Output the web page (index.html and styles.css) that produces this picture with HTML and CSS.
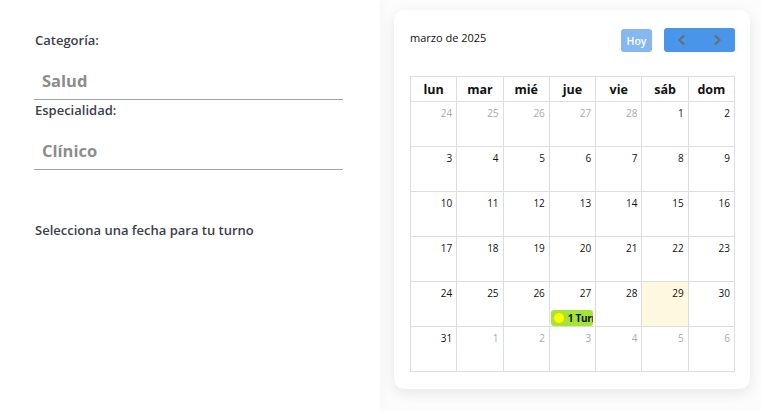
FILE: index.html
```html
<!DOCTYPE html>
<html lang="es">
<head>
<meta charset="utf-8">
<link rel="stylesheet" href="styles.css">
</head>
<body>
<div class="page">
  <section class="left">
    <div class="field">
      <label class="label">Categoría:</label>
      <div class="value">Salud</div>
    </div>
    <div class="field">
      <label class="label">Especialidad:</label>
      <div class="value">Clínico</div>
    </div>
    <p class="prompt">Selecciona una fecha para tu turno</p>
  </section>
  <section class="right">
    <div class="card">
      <div class="toolbar">
        <h2 class="title">marzo de 2025</h2>
        <div class="actions">
          <button class="btn btn-today">Hoy</button>
          <div class="btn-group">
            <button class="btn btn-nav"><svg width="10" height="12" viewBox="0 0 10 12"><path d="M7 1.5 2.5 6 7 10.5" fill="none" stroke="#6b6f78" stroke-width="2.2"/></svg></button>
            <button class="btn btn-nav"><svg width="10" height="12" viewBox="0 0 10 12"><path d="M3 1.5 7.5 6 3 10.5" fill="none" stroke="#6b6f78" stroke-width="2.2"/></svg></button>
          </div>
        </div>
      </div>
      <table class="cal">
        <thead>
          <tr><th>lun</th><th>mar</th><th>mié</th><th>jue</th><th>vie</th><th>sáb</th><th>dom</th></tr>
        </thead>
        <tbody>
          <tr><td class="other"><span class="num">24</span></td><td class="other"><span class="num">25</span></td><td class="other"><span class="num">26</span></td><td class="other"><span class="num">27</span></td><td class="other"><span class="num">28</span></td><td><span class="num">1</span></td><td><span class="num">2</span></td></tr>
          <tr><td><span class="num">3</span></td><td><span class="num">4</span></td><td><span class="num">5</span></td><td><span class="num">6</span></td><td><span class="num">7</span></td><td><span class="num">8</span></td><td><span class="num">9</span></td></tr>
          <tr><td><span class="num">10</span></td><td><span class="num">11</span></td><td><span class="num">12</span></td><td><span class="num">13</span></td><td><span class="num">14</span></td><td><span class="num">15</span></td><td><span class="num">16</span></td></tr>
          <tr><td><span class="num">17</span></td><td><span class="num">18</span></td><td><span class="num">19</span></td><td><span class="num">20</span></td><td><span class="num">21</span></td><td><span class="num">22</span></td><td><span class="num">23</span></td></tr>
          <tr><td><span class="num">24</span></td><td><span class="num">25</span></td><td><span class="num">26</span></td><td><span class="num">27</span><div class="event"><span class="dot"></span><span class="ev-text">1 Turno</span></div></td><td><span class="num">28</span></td><td class="today"><span class="num">29</span></td><td><span class="num">30</span></td></tr>
          <tr><td><span class="num">31</span></td><td class="other"><span class="num">1</span></td><td class="other"><span class="num">2</span></td><td class="other"><span class="num">3</span></td><td class="other"><span class="num">4</span></td><td class="other"><span class="num">5</span></td><td class="other"><span class="num">6</span></td></tr>
        </tbody>
      </table>
    </div>
  </section>
</div>
</body>
</html>
```

FILE: styles.css
```css
* { box-sizing: border-box; }
html, body { margin: 0; padding: 0; }
body {
  font-family: "Open Sans", "Noto Sans", sans-serif;
  background: #fcfcfc;
  width: 761px;
  height: 411px;
  overflow: hidden;
}
.page {
  display: flex;
  height: 411px;
}
.left {
  width: 380px;
  background: #fff;
  padding: 31px 37px 0 34px;
  box-shadow: 2px 0 10px rgba(0,0,0,0.035);
  position: relative;
  z-index: 1;
}
.field { display: flex; flex-direction: column; }
.label {
  font-size: 13px;
  font-weight: 600;
  color: #3a3f4b;
  line-height: 18px;
  padding-left: 1px;
}
.value {
  font-size: 16.5px;
  font-weight: 700;
  color: #8c8c8c;
  padding: 20px 0 7px 8px;
  line-height: 23px;
  border-bottom: 1px solid #a0a4ae;
}
.field + .field .label { margin-top: 1px; }
.prompt {
  margin: 51px 0 0 1px;
  font-size: 13px;
  line-height: 18px;
  font-weight: 600;
  color: #3a3f4b;
}
.right {
  flex: 1;
  padding: 10px 11px 0 14px;
}
.card {
  background: #fff;
  border-radius: 10px;
  box-shadow: 0 4px 14px rgba(0,0,0,0.09);
  padding: 18px 15px 17px 16px;
}
.toolbar {
  display: flex;
  justify-content: space-between;
  align-items: flex-start;
  height: 24px;
  margin-bottom: 24px;
}
.title {
  margin: 2px 0 0;
  font-size: 11px;
  font-weight: 400;
  color: #111;
}
.actions { display: flex; gap: 12px; }
.btn {
  border: none;
  font-family: inherit;
  padding: 0;
  color: #fff;
  height: 23px;
  display: flex;
  align-items: center;
  justify-content: center;
}
.btn-today {
  width: 31px;
  margin-top: 1px;
  background: #85b8f0;
  border-radius: 3px;
  font-size: 10.5px;
  font-weight: 600;
}
.btn-group {
  display: flex;
  background: #4895ea;
  border-radius: 3px;
  height: 24px;
}
.btn-nav {
  background: transparent;
  width: 35.5px;
  height: 24px;
}
.cal {
  width: 325px;
  border-collapse: collapse;
  table-layout: fixed;
  font-size: 10px;
}
.cal th, .cal td {
  border: 1px solid #dddddd;
}
.cal th {
  height: 25px;
  font-size: 12.5px;
  font-weight: 700;
  color: #111;
  padding: 0;
}
.cal td {
  height: 45px;
  vertical-align: top;
  text-align: right;
  padding: 4px 4px 0 0;
  color: #111;
  overflow: hidden;
}
.cal td.other { color: #aaa; }
.cal td.today { background: #fef8de; }
.num {
  display: block;
  line-height: 14px;
}
.event {
  margin: 10px 0 0 1px;
  width: 42px;
  height: 16px;
  background: #a6e432;
  border-radius: 3px;
  display: flex;
  align-items: center;
  padding-left: 3px;
  overflow: hidden;
  white-space: nowrap;
  text-align: left;
}
.dot {
  width: 10px;
  height: 10px;
  border-radius: 50%;
  background: #ffff00;
  flex: none;
  margin-right: 4px;
}
.ev-text {
  font-size: 10px;
  font-weight: 700;
  color: #111;
  letter-spacing: -0.3px;
}
```
